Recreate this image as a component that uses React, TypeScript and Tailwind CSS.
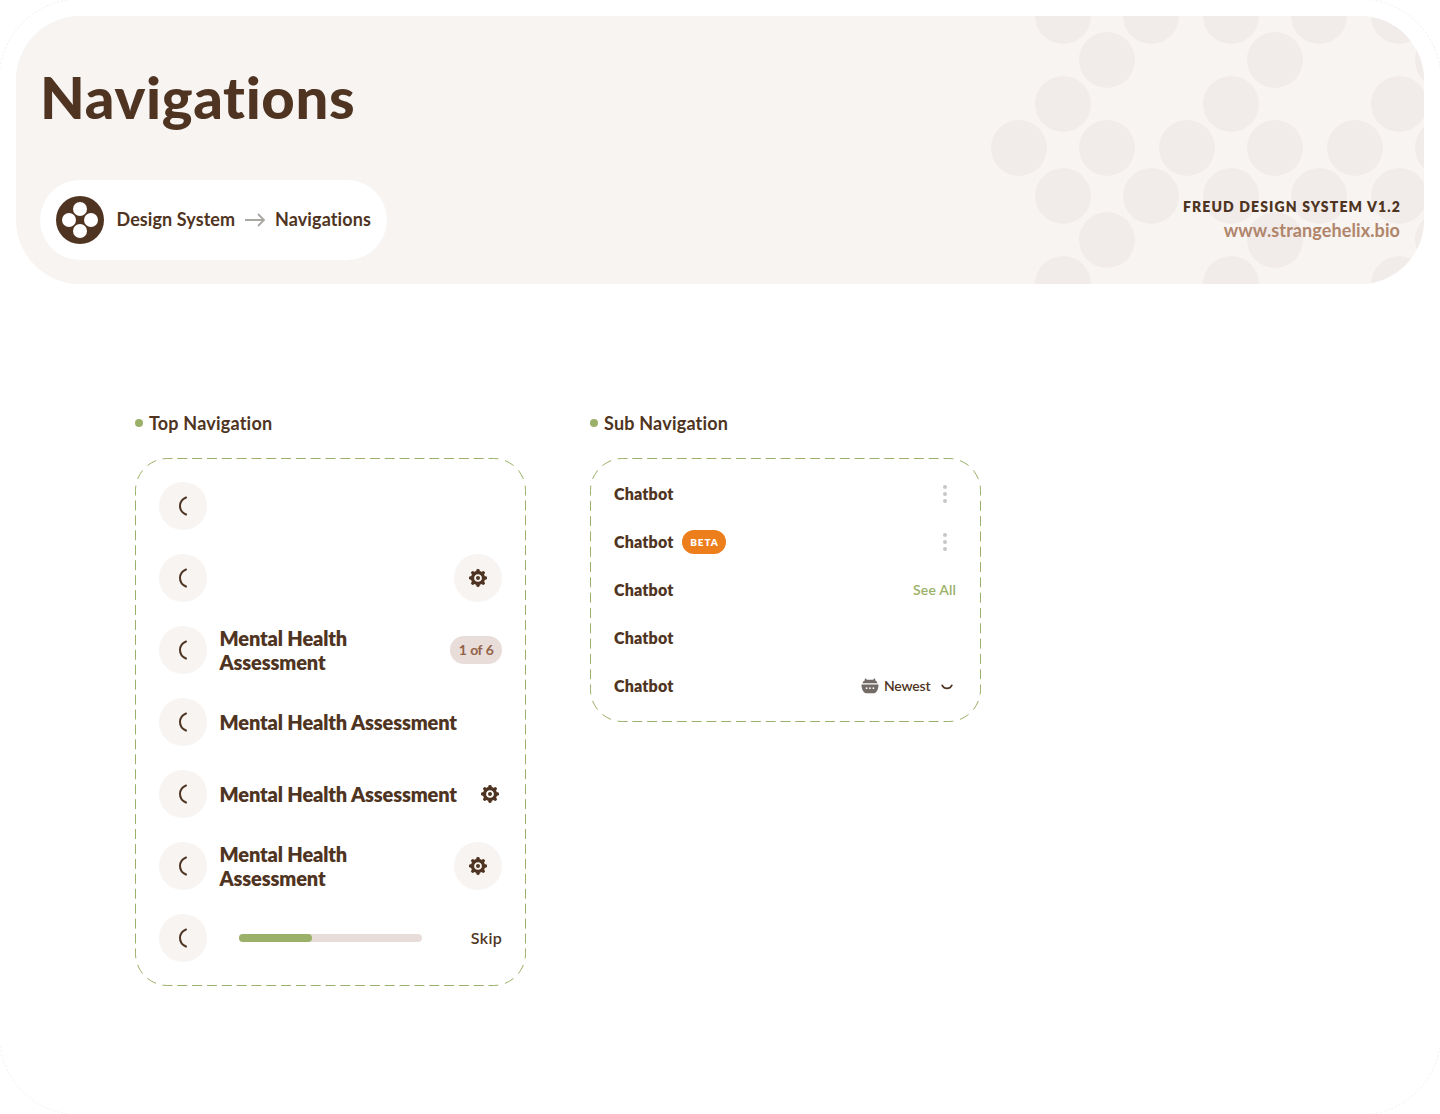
import React from "react";

const BROWN = "#4f3422";

function Panel({ w, h, rows, children }: { w: number; h: number; rows: number; children: React.ReactNode }) {
  const r = 32;
  const R = w - 0.5;
  const B = h - 0.5;
  const gapX = (w - 1 - 2 * r) / 22 - 10;
  const gapY = (h - 1 - 2 * r) / rows - 10;
  const gapC = (Math.PI * r) / 2 / 3 - 10;
  const x1 = 0.5 + r;
  const x2 = R - r;
  const y2 = B - r;
  return (
    <div className="relative w-[391px] p-6">
      <svg className="pointer-events-none absolute inset-0" width={w} height={h} fill="none" stroke="#9bb068" strokeDashoffset="5">
        <path d={`M${x1} 0.5H${x2}M${x1} ${B}H${x2}`} strokeDasharray={`10 ${gapX}`} />
        <path d={`M0.5 ${x1}V${y2}M${R} ${x1}V${y2}`} strokeDasharray={`10 ${gapY}`} />
        <path
          d={`M0.5 ${x1}A32 32 0 0 1 ${x1} 0.5M${x2} 0.5A32 32 0 0 1 ${R} ${x1}M${R} ${y2}A32 32 0 0 1 ${x2} ${B}M${x1} ${B}A32 32 0 0 1 0.5 ${y2}`}
          strokeDasharray={`10 ${gapC}`}
        />
      </svg>
      {children}
    </div>
  );
}

function Heading({ children }: { children: string }) {
  return (
    <div className="flex h-6 items-center gap-1.5">
      <span className="size-2 rounded-full bg-[#9bb068]" />
      <span className="text-[18px] font-bold leading-6 tracking-[0.2px]">{children}</span>
    </div>
  );
}

function Back() {
  return (
    <div className="flex size-12 shrink-0 items-center justify-center rounded-full bg-[#f7f4f2]">
      <svg width="24" height="24" fill="none" stroke={BROWN} strokeWidth="2" strokeLinecap="round">
        <path d="M15 3.500C7 7 7 17 15 20.500" />
      </svg>
    </div>
  );
}

const TEETH = [0, 45, 90, 135, 180, 225, 270, 315];

function Gear() {
  return (
    <svg width="24" height="24" viewBox="0 0 24 24" fill={BROWN}>
      {TEETH.map((a) => (
        <rect key={a} x="10.300" y="3" width="3.400" height="5" rx="1.400" transform={`rotate(${a} 12 12)`} />
      ))}
      <circle cx="12" cy="12" r="5.500" fill="none" stroke={BROWN} strokeWidth="3.300" />
      <circle cx="12" cy="12" r="2" />
    </svg>
  );
}

function GearButton() {
  return (
    <div className="ml-auto flex size-12 items-center justify-center rounded-full bg-[#f7f4f2]">
      <Gear />
    </div>
  );
}

function Title({ wrap }: { wrap?: boolean }) {
  return (
    <div className="ml-[12.500px] whitespace-nowrap text-[20px] font-extrabold leading-6 tracking-[-0.14px]">
      Mental Health{wrap ? <br /> : " "}Assessment
    </div>
  );
}

function Row({ children }: { children?: React.ReactNode }) {
  return (
    <div className="flex h-12 items-center">
      <Back />
      {children}
    </div>
  );
}

function SubRow({ badge, children }: { badge?: boolean; children?: React.ReactNode }) {
  return (
    <div className="flex h-6 items-center">
      <span className="w-[60px] text-[16px] font-extrabold leading-6 tracking-[0.18px]">Chatbot</span>
      {badge && (
        <span className="ml-2 flex h-6 w-11 items-center justify-center rounded-full bg-[#ed7e1c] pl-px text-[10px] font-extrabold tracking-[0.900px] text-white">
          BETA
        </span>
      )}
      <div className="ml-auto flex items-center">{children}</div>
    </div>
  );
}

function Dots() {
  return (
    <svg width="24" height="24" fill="#c9c7c5">
      <circle cx="12" cy="5" r="2" />
      <circle cx="12" cy="12" r="2" />
      <circle cx="12" cy="19" r="2" />
    </svg>
  );
}

function BotIcon() {
  return (
    <svg width="18" height="16" viewBox="0 0 18 16" fill="#736b66">
      <path d="M1.500 5.200C2 3.600 2.900 2.700 3.900 2.300L3.700 1C3.800 .5 4.500 .4 4.900 .8L6 1.700H12L13.100 .8C13.500 .4 14.200 .5 14.300 1L14.100 2.300C15.100 2.700 16 3.600 16.500 5.200Z" />
      <path d="M.5 6.400H17.500C17.500 11.500 15.500 15.300 12 15.300H6C2.500 15.300 .5 11.500 .5 6.400Z" />
      <g fill="#fff">
        <circle cx="5.600" cy="10.200" r=".9" />
        <circle cx="9" cy="10.200" r=".9" />
        <circle cx="12.400" cy="10.200" r=".9" />
      </g>
    </svg>
  );
}

const CIRCLES = [
  [1063, 16], [1151, 16], [1231, 16], [1319, 16], [1399, 16],
  [1107, 60], [1275, 60], [1443, 60],
  [1063, 104], [1231, 104], [1399, 104],
  [1019, 148], [1107, 148], [1187, 148], [1275, 148], [1355, 148], [1443, 148],
  [1063, 196], [1151, 196], [1231, 196], [1319, 196], [1399, 196],
  [1107, 240], [1275, 240], [1443, 240],
  [1063, 284], [1231, 284], [1399, 284],
];

export default function App() {
  return (
    <div className="relative h-[1114px] w-[1440px] overflow-hidden bg-white p-4 font-['Lato',sans-serif] text-[#4f3422] [font-variant-ligatures:none]">
      <svg className="absolute inset-0" width="1440" height="1114" fill="none" stroke="#f1f1f1">
        <path d="M0 68A80 80 0 0 1 68 0M1372 0A80 80 0 0 1 1440 68M0 1046A80 80 0 0 0 68 1114M1372 1114A80 80 0 0 0 1440 1046" strokeDasharray="2 2" />
      </svg>
      <header className="relative flex h-[268px] justify-between overflow-hidden rounded-[64px] bg-[#f7f4f2] px-6 py-6">
        <svg className="absolute inset-0" width="1408" height="268" viewBox="16 16 1408 268" fill="#f1ecea">
          {CIRCLES.map(([x, y]) => (
            <circle key={`${x}-${y}`} cx={x} cy={y} r="28" />
          ))}
        </svg>
        <div className="relative flex flex-col justify-between">
          <h1 className="mt-[21px] text-[58px] font-black leading-[72px] tracking-[0.650px]">Navigations</h1>
          <div className="flex h-20 w-[347px] items-center rounded-full bg-white pl-4 text-[18px] font-bold leading-6">
            <svg width="48" height="48" fill="#fff">
              <circle cx="24" cy="24" r="24" fill={BROWN} />
              <circle cx="24" cy="13" r="7" />
              <circle cx="24" cy="35" r="7" />
              <circle cx="13" cy="24" r="7" />
              <circle cx="35" cy="24" r="7" />
            </svg>
            <span className="mb-0.5 ml-[12.500px] w-[119px] whitespace-nowrap tracking-[0.08px]">Design System</span>
            <svg className="ml-[8.500px]" width="22" height="16" fill="none" stroke="#a9a7a2" strokeWidth="1.800">
              <path d="M1 8H20M14 2L20 8L14 14" />
            </svg>
            <span className="mb-0.5 ml-[9px] whitespace-nowrap tracking-[0.1px]">Navigations</span>
          </div>
        </div>
        <div className="relative flex flex-col items-end justify-end pb-[18px] leading-6">
          <div className="-mr-px whitespace-nowrap pt-px text-[14px] font-extrabold tracking-[1.130px]">FREUD DESIGN SYSTEM V1.2</div>
          <div className="-mt-px whitespace-nowrap text-[18px] font-bold tracking-[0.1px] text-[#b0856b]">www.strangehelix.bio</div>
        </div>
      </header>

      <main className="relative ml-[119px] mt-[127px] flex items-start gap-16">
        <section className="flex flex-col gap-[23px]">
          <Heading>Top Navigation</Heading>
          <Panel w={391} h={528} rows={31}>
            <div className="flex flex-col gap-6">
              <Row />
              <Row><GearButton /></Row>
              <Row>
                <Title wrap />
                <span className="ml-auto flex h-7 w-[52px] items-center justify-center rounded-full bg-[#e8ddd9] pb-0.5 text-[14px] font-bold tracking-[-0.500px] text-[#926247] [word-spacing:1px]">1 of 6</span>
              </Row>
              <Row><Title /></Row>
              <Row>
                <Title />
                <div className="ml-auto"><Gear /></div>
              </Row>
              <Row>
                <Title wrap />
                <GearButton />
              </Row>
              <Row>
                <div className="ml-8 h-2 w-[183px] rounded-full bg-[#e8ddd9]">
                  <div className="h-2 w-[73px] rounded-full bg-[#9bb068]" />
                </div>
                <span className="ml-auto text-[16px] font-semibold tracking-[0.3px]">Skip</span>
              </Row>
            </div>
          </Panel>
        </section>
        <section className="flex flex-col gap-[23px]">
          <Heading>Sub Navigation</Heading>
          <Panel w={391} h={264} rows={13}>
            <div className="flex flex-col gap-6">
              <SubRow><Dots /></SubRow>
              <SubRow badge><Dots /></SubRow>
              <SubRow><span className="mb-0.5 mr-px text-[14px] font-semibold tracking-[0.15px] text-[#9bb068]">See All</span></SubRow>
              <SubRow />
              <SubRow>
                <BotIcon />
                <span className="mb-0.5 ml-[5px] w-[47px] whitespace-nowrap text-[14px] font-semibold tracking-[-0.200px]">Newest</span>
                <svg className="ml-1.5" width="20" height="20" fill="none" stroke={BROWN} strokeWidth="1.700" strokeLinecap="round">
                  <path d="M5.200 9.300C7.300 13.400 12.700 13.400 14.800 9.300" />
                </svg>
              </SubRow>
            </div>
          </Panel>
        </section>
      </main>
    </div>
  );
}
